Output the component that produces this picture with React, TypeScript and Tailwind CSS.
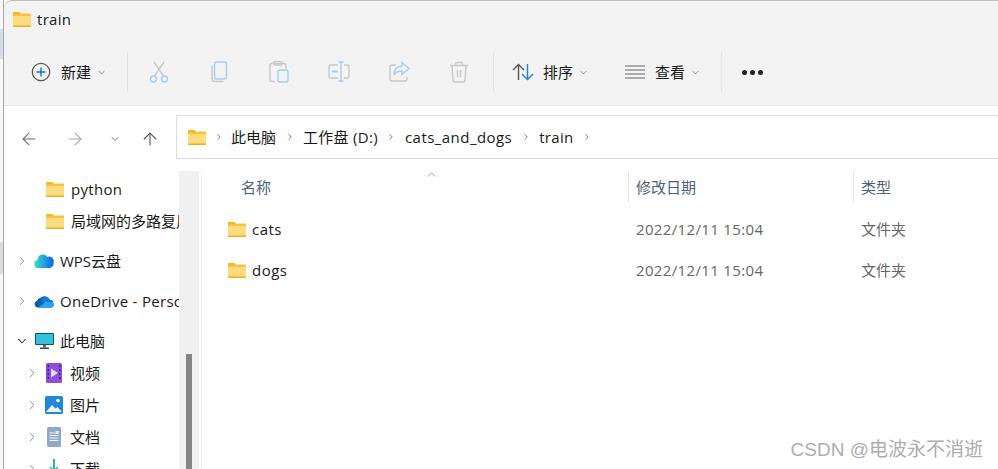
import React from "react";
import { ChevronRight, ChevronDown, ChevronUp, ArrowLeft, ArrowRight, ArrowUp } from "lucide-react";

const FONT = "font-['Open_Sans','Noto_Sans_CJK_SC',sans-serif]";

const FolderIcon = ({ className = "" }: { className?: string }) => (
  <svg viewBox="0 0 18 15" className={`w-[18px] h-[15px] shrink-0 ${className}`}>
    <path d="M0 1.2C0 .5.5 0 1.2 0h4.6c.4 0 .7.1 1 .4L8.4 2H0z" fill="#f9b716" />
    <path d="M0 3h18v10.8c0 .7-.5 1.2-1.2 1.2H1.2C.5 15 0 14.5 0 13.8z" fill="#fcdc7f" />
    <path d="M0 13.6h18v.3c0 .6-.5 1.1-1.2 1.1H1.2C.5 15 0 14.5 0 13.9z" fill="#f0ae1a" />
    <path d="M0 2h8l1-.6h7.8c.7 0 1.2.5 1.2 1.2V4H0z" fill="#f7c23e" />
  </svg>
);

const Divider = () => <div className="w-px h-[40px] bg-[#e2e2e2] shrink-0" />;

const Caret = () => <ChevronDown size={11} strokeWidth={1.5} className="text-[#666]" />;

const ToolIcon = ({ children }: { children: React.ReactNode }) => (
  <div className="w-[60px] flex justify-center">
    <svg viewBox="0 0 24 24" className="w-[24px] h-[24px]" fill="none" strokeWidth="1.4">
      {children}
    </svg>
  </div>
);

const Toolbar = () => (
  <div className="flex items-center h-[40px] mt-[16px] pl-[27px]">
    <svg viewBox="0 0 20 20" className="w-[20px] h-[20px]" fill="none">
      <circle cx="10" cy="10" r="8.7" stroke="#555" strokeWidth="1.2" />
      <path d="M10 5.5v9M5.5 10h9" stroke="#0a74d0" strokeWidth="1.4" />
    </svg>
    <span className="ml-[10px] text-[15px] text-[#1a1a1a]">新建</span>
    <span className="ml-[5px] mr-[20px]"><Caret /></span>
    <Divider />
    <div className="flex items-center pl-[1px]">
      <ToolIcon>
        <path d="M7 2l9.5 14M17 2L7.500 16" stroke="#c8c8c8" />
        <circle cx="6.500" cy="19" r="3" stroke="#a6cdee" />
        <circle cx="17.500" cy="19" r="3" stroke="#a6cdee" />
      </ToolIcon>
      <ToolIcon>
        <path d="M5 5.500v13.500a2.500 2.500 0 0 0 2.500 2.500h9" stroke="#c8c8c8" />
        <rect x="7.500" y="2" width="12" height="17" rx="2" stroke="#a6cdee" />
      </ToolIcon>
      <ToolIcon>
        <path d="M8 21.500H5a2 2 0 0 1-2-2V5.500a2 2 0 0 1 2-2h12a2 2 0 0 1 2 2v3" stroke="#c8c8c8" />
        <rect x="7" y="1.500" width="8" height="3.500" rx="1" stroke="#c8c8c8" />
        <rect x="11" y="10" width="10" height="12" rx="2" stroke="#a6cdee" />
      </ToolIcon>
      <ToolIcon>
        <path d="M11 5H3.500a1.500 1.500 0 0 0-1.500 1.500v10A1.500 1.500 0 0 0 3.500 18H11M17 5h3.500A1.500 1.500 0 0 1 22 6.500v10a1.500 1.500 0 0 1-1.500 1.500H17" stroke="#c8c8c8" />
        <path d="M14 2v19M11.500 2h5M11.500 21h5" stroke="#a6cdee" />
        <path d="M5 11.500h6" stroke="#a6cdee" strokeWidth="2" />
      </ToolIcon>
      <ToolIcon>
        <path d="M9 5H5a2 2 0 0 0-2 2v12a2 2 0 0 0 2 2h13a2 2 0 0 0 2-2v-2" stroke="#c8c8c8" />
        <path d="M15 2.500l7 6-7 6v-3.500c-4 0-6.500 1.200-8 4 0-5 2.500-8.500 8-9z" stroke="#a6cdee" />
      </ToolIcon>
      <ToolIcon>
        <path d="M3 5.500h18M8.500 5.500V4a1.500 1.500 0 0 1 1.500-1.500h4A1.500 1.500 0 0 1 15.500 4v1.500M5 5.500l1 14.500a2 2 0 0 0 2 2h8a2 2 0 0 0 2-2l1-14.500M10.500 10v7.500M13.500 10v7.500" stroke="#c8c8c8" />
      </ToolIcon>
    </div>
    <div className="ml-[4px]"><Divider /></div>
    <svg viewBox="0 0 22 18" className="ml-[18px] w-[22px] h-[18px]" fill="none" strokeWidth="1.4">
      <path d="M6.500 17V1.500M1 7l5.500-5.500L12 7" stroke="#555" />
      <path d="M15.500 1v15.500M10 11l5.500 5.500L21 11" stroke="#1683d8" />
    </svg>
    <span className="ml-[9px] text-[15px] text-[#1a1a1a]">排序</span>
    <span className="ml-[5px] mr-[36px]"><Caret /></span>
    <svg viewBox="0 0 20 14" className="w-[20px] h-[14px]" fill="none" stroke="#666" strokeWidth="1.2">
      <path d="M0 1h20M0 5h20M0 9h20M0 13h20" />
    </svg>
    <span className="ml-[10px] text-[15px] text-[#1a1a1a]">查看</span>
    <span className="ml-[5px] mr-[20px]"><Caret /></span>
    <Divider />
    <div className="ml-[20px] flex gap-[3px]">
      <span className="w-[5px] h-[5px] rounded-full bg-[#222]" />
      <span className="w-[5px] h-[5px] rounded-full bg-[#222]" />
      <span className="w-[5px] h-[5px] rounded-full bg-[#222]" />
    </div>
  </div>
);

const CrumbSep = () => <ChevronRight size={10} strokeWidth={2} className="text-[#666] mx-[8.5px] shrink-0" />;

const Crumb = ({ label, tracking = "" }: { label: string; tracking?: string }) => (
  <>
    <span className={`text-[15px] text-[#1a1a1a] whitespace-nowrap ${tracking}`}>{label}</span>
    <CrumbSep />
  </>
);

const AddressRow = () => (
  <div className="flex items-center h-[65px] shrink-0">
    <div className="w-[172px] flex items-center shrink-0 pl-[15px] text-[#6e6e6e]">
      <ArrowLeft size={20} strokeWidth={1.3} />
      <ArrowRight size={20} strokeWidth={1.3} className="ml-[26px] text-[#a8a8a8]" />
      <ChevronDown size={12} strokeWidth={1.8} className="ml-[24px] text-[#666]" />
      <ArrowUp size={20} strokeWidth={1.3} className="ml-[19px] text-[#555]" />
    </div>
    <div className="flex-1 h-[44px] -mt-[3px] flex items-center border border-[#dedede] border-r-0 pl-[11px]">
      <FolderIcon />
      <ChevronRight size={10} strokeWidth={2} className="text-[#666] mx-[7.5px] shrink-0" />
      <Crumb label="此电脑" />
      <Crumb label="工作盘 (D:)" tracking="tracking-[0.3px]" />
      <Crumb label="cats_and_dogs" tracking="tracking-[0.45px]" />
      <Crumb label="train" tracking="tracking-[0.3px]" />
    </div>
  </div>
);

const NavRow = ({
  indent,
  caret,
  icon,
  label,
  gap = "ml-[7px]",
  latin,
}: {
  indent: string;
  caret?: "right" | "down";
  icon: React.ReactNode;
  label: string;
  gap?: string;
  latin?: boolean;
}) => (
  <div className={`flex items-center h-[32px] ${indent} whitespace-nowrap`}>
    {caret && (
      <span className="w-[19px] shrink-0">
        {caret === "right" && <ChevronRight size={14} strokeWidth={1.5} className="text-[#777]" />}
        {caret === "down" && <ChevronDown size={14} strokeWidth={1.8} className="text-[#333]" />}
      </span>
    )}
    <span className="w-[20px] shrink-0 flex justify-center">{icon}</span>
    <span className={`${gap} text-[15px] text-[#1a1a1a] ${latin ? "tracking-[0.3px]" : ""}`}>{label}</span>
  </div>
);

const WpsCloud = () => (
  <svg viewBox="0 0 20 16" className="w-[20px] h-[16px]">
    <defs>
      <linearGradient id="wps" x1="0" y1="0" x2="1" y2="0">
        <stop offset="0" stopColor="#3fe0c0" />
        <stop offset="0.55" stopColor="#1e9be8" />
        <stop offset="1" stopColor="#0b5fe0" />
      </linearGradient>
    </defs>
    <path d="M4 15a4 4 0 0 1-.6-7.900A5.500 5.500 0 0 1 13.500 4a4.500 4.500 0 0 1 6 5.500A4.500 4.500 0 0 1 15.500 15z" fill="url(#wps)" />
  </svg>
);

const OneDrive = () => (
  <svg viewBox="0 0 20 14" className="w-[20px] h-[14px]">
    <path d="M4 13.500a3.500 3.500 0 0 1-1-6.800 5 5 0 0 1 4-3.200A6 6 0 0 1 16 6a3.800 3.800 0 0 1 3.500 2z" fill="#0f6cbd" />
    <path d="M3 7a5 5 0 0 1 5-1l3 2-7 5.500A3.500 3.500 0 0 1 3 7z" fill="#0a5cb0" />
    <path d="M7 7a5 5 0 0 1 9-1 4 4 0 0 1 3.500 2L12 10z" fill="#0f7fd8" />
    <path d="M4 14h12.500a3.500 3.500 0 0 0 3-5.500L12 7.500z" fill="#2aa5ec" />
  </svg>
);

const PcIcon = () => (
  <svg viewBox="0 0 19 16" className="w-[19px] h-[16px]">
    <rect x="0" y="0" width="19" height="12" rx="1" fill="#14506a" />
    <rect x="1" y="1" width="17" height="10" fill="#33c3d9" />
    <rect x="8" y="12" width="3" height="2.500" fill="#5a6a78" />
    <rect x="5" y="14.500" width="9" height="1.500" fill="#3a4652" />
  </svg>
);

const VideoIcon = () => (
  <svg viewBox="0 0 16 20" className="w-[16px] h-[20px]">
    <rect width="16" height="20" rx="1.500" fill="#8d4fd8" />
    <path d="M5 5.500l7 4.500-7 4.500z" fill="#e6d7fa" />
    <path d="M1.500 2h1.500v2H1.500zM1.500 6h1.500v2H1.500zM1.500 10h1.500v2H1.500zM1.500 14h1.500v2H1.500zM13 2h1.500v2H13zM13 6h1.500v2H13zM13 10h1.500v2H13zM13 14h1.500v2H13z" fill="#3f1a80" />
  </svg>
);

const PictureIcon = () => (
  <svg viewBox="0 0 18 18" className="w-[18px] h-[18px]">
    <rect width="18" height="18" rx="1.500" fill="#1e8ad6" />
    <circle cx="13" cy="4.500" r="1.800" fill="#fff" />
    <path d="M1 16l6-7 3.500 3.500 2-1.500L17 16z" fill="#eaf5fc" />
  </svg>
);

const DocIcon = () => (
  <svg viewBox="0 0 14 20" className="w-[14px] h-[20px]">
    <rect width="14" height="20" rx="1.500" fill="#8fa9c6" />
    <path d="M2.500 5.500h5v1h-5zM2.500 8h9v1h-9zM2.500 10.500h9v1h-9zM2.500 13h9v1h-9z" fill="#f2f6fb" />
    <rect x="8.500" y="4" width="3" height="3" fill="#f2f6fb" />
  </svg>
);

const DownloadIcon = () => (
  <svg viewBox="0 0 16 20" className="w-[16px] h-[20px]" fill="none">
    <path d="M8 0v11" stroke="#2fb8a0" strokeWidth="2" />
    <path d="M4 8l4 4 4-4" stroke="#2fb8a0" strokeWidth="1.500" />
    <path d="M1 14v4h14v-4" stroke="#3ca0d8" strokeWidth="1.500" />
  </svg>
);

const Sidebar = () => (
  <div className="w-[175px] shrink-0 overflow-hidden pt-[2px]">
    <NavRow indent="pl-[41px]" icon={<FolderIcon />} label="python" gap="ml-[6px]" latin />
    <NavRow indent="pl-[41px]" icon={<FolderIcon />} label="局域网的多路复用技术" gap="ml-[6px]" />
    <div className="h-[8px]" />
    <NavRow indent="pl-[11px]" caret="right" icon={<WpsCloud />} label="WPS云盘" gap="ml-[6px]" />
    <div className="h-[8px]" />
    <NavRow indent="pl-[11px]" caret="right" icon={<OneDrive />} label="OneDrive - Personal" gap="ml-[6px]" latin />
    <div className="h-[8px]" />
    <NavRow indent="pl-[11px]" caret="down" icon={<PcIcon />} label="此电脑" gap="ml-[6px]" />
    <NavRow indent="pl-[21px]" caret="right" icon={<VideoIcon />} label="视频" gap="ml-[6px]" />
    <NavRow indent="pl-[21px]" caret="right" icon={<PictureIcon />} label="图片" gap="ml-[6px]" />
    <NavRow indent="pl-[21px]" caret="right" icon={<DocIcon />} label="文档" gap="ml-[6px]" />
    <NavRow indent="pl-[21px]" caret="right" icon={<DownloadIcon />} label="下载" gap="ml-[6px]" />
  </div>
);

const Scrollbar = () => (
  <div className="w-[20px] shrink-0 bg-[#f0f0f0] pl-[7px] pt-[183px]">
    <div className="w-[6px] h-[200px] bg-[#858585]" />
  </div>
);

const HeaderCell = ({ label, className }: { label: string; className: string }) => (
  <div className={`flex items-center h-[32px] text-[15px] text-[#4c607a] ${className}`}>{label}</div>
);

const FileRow = ({ name }: { name: string }) => (
  <div className="flex items-center h-[41px]">
    <div className="w-[426px] flex items-center pl-[26px]">
      <FolderIcon />
      <span className="ml-[6px] text-[15px] tracking-[0.5px] text-[#1a1a1a]">{name}</span>
    </div>
    <div className="w-[225px] pl-[8px] text-[15px] tracking-[0.35px] text-[#666]">2022/12/11 15:04</div>
    <div className="pl-[8px] text-[15px] text-[#666]">文件夹</div>
  </div>
);

const FileList = () => (
  <div className="relative flex-1 border-l border-[#f0f0f0] ml-[2px]">
    <ChevronUp size={13} strokeWidth={1.2} className="absolute left-[223px] top-[-3px] text-[#666]" />
    <div className="flex mb-[6px]">
      <HeaderCell label="名称" className="w-[426px] pl-[39px]" />
      <HeaderCell label="修改日期" className="w-[225px] pl-[7px] border-l border-[#e5e5e5]" />
      <HeaderCell label="类型" className="flex-1 pl-[7px] border-l border-[#e5e5e5]" />
    </div>
    <FileRow name="cats" />
    <FileRow name="dogs" />
  </div>
);

// neighbouring window peeking out at the left edge
const LeftStrip = () => (
  <div className="w-[3px] shrink-0 flex flex-col bg-[#f7f7f7]">
    <div className="h-[29px]" />
    <div className="h-[30px] bg-[#cfdcea]" />
    <div className="h-[183px]" />
    <div className="h-[32px] bg-[#dcdcdc]" />
  </div>
);

export default function App() {
  return (
    <div className={`relative w-[998px] h-[469px] overflow-hidden flex bg-white ${FONT}`}>
      <LeftStrip />
      <div className="w-px shrink-0 bg-[#a8a8a8]" />
      <div className="flex-1 flex flex-col min-w-0">
        <div className="h-[106px] shrink-0 bg-[#f3f3f3] border-t border-[#bdbdbd] border-b-[#e5e5e5] border-b rounded-tl-[8px]">
          <div className="flex items-center h-[35px] pl-[9px] pt-[1px]">
            <FolderIcon />
            <span className="ml-[6px] text-[15px] tracking-[0.3px] text-[#1a1a1a]">train</span>
          </div>
          <Toolbar />
        </div>
        <AddressRow />
        <div className="flex flex-1 min-h-0">
          <Sidebar />
          <Scrollbar />
          <FileList />
        </div>
      </div>
      <div className="absolute right-[15px] bottom-[5px] text-[19px] text-[#adadad] font-['Liberation_Sans','Noto_Sans_CJK_SC',sans-serif]">
        CSDN @电波永不消逝
      </div>
    </div>
  );
}
